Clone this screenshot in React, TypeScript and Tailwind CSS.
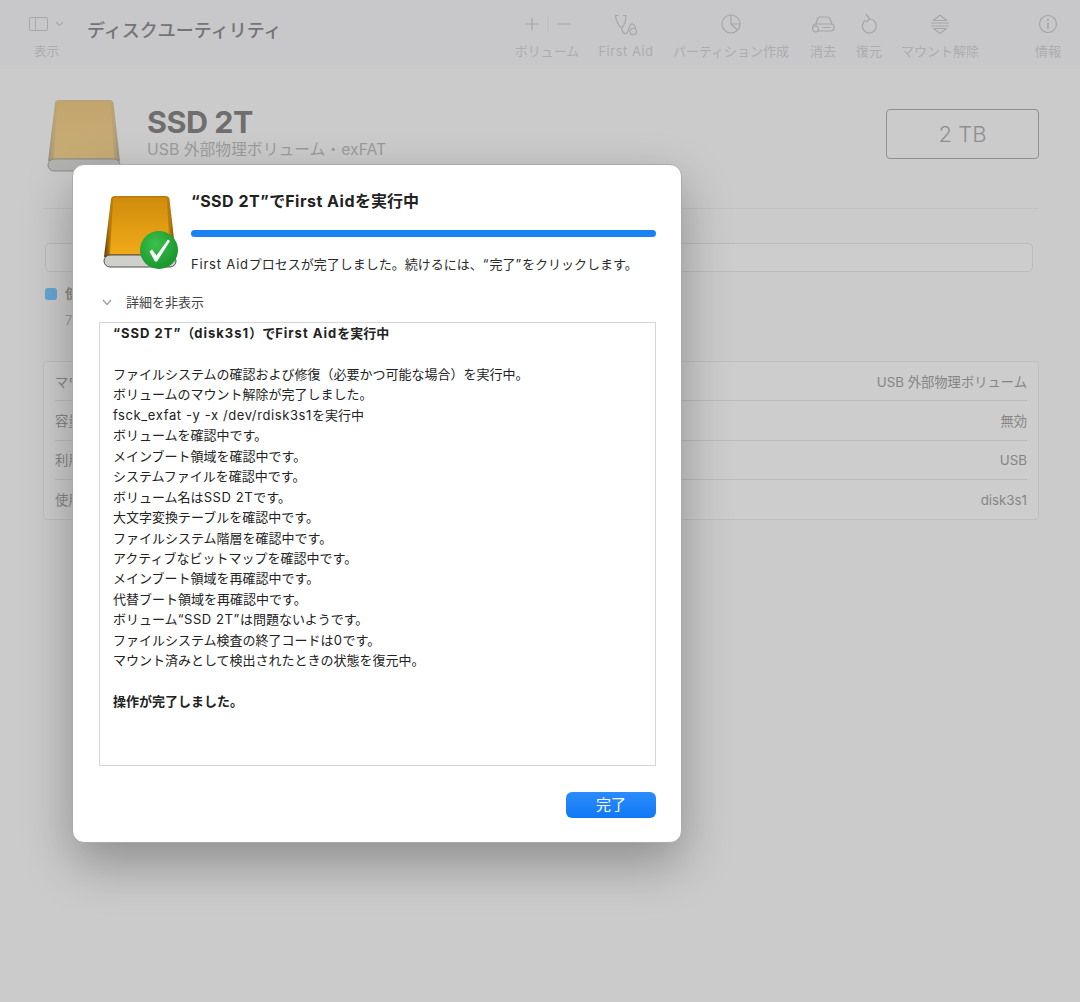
import React from 'react';

const font = { fontFamily: 'Inter, "Noto Sans CJK JP", sans-serif' };

const DriveIcon = ({ muted }: { muted?: boolean }) => (
  <svg viewBox="0 0 76 76" className="w-full h-full">
    <defs>
      <linearGradient id={muted ? 'bodyM' : 'body'} x1="0" y1="0" x2="0" y2="1">
        <stop offset="0" stopColor={muted ? '#c2a56c' : '#cf8c0c'} />
        <stop offset="1" stopColor={muted ? '#c8ad76' : '#f0aa18'} />
      </linearGradient>
      <linearGradient id={muted ? 'sideM' : 'side'} x1="0" y1="0" x2="1" y2="0">
        <stop offset="0" stopColor={muted ? '#9b9078' : '#5a3800'} />
        <stop offset="0.08" stopColor={muted ? '#b7a377' : '#b87c0a'} />
        <stop offset="0.92" stopColor={muted ? '#b7a377' : '#b87c0a'} />
        <stop offset="1" stopColor={muted ? '#9b9078' : '#5a3800'} />
      </linearGradient>
    </defs>
    <path d="M8 4 Q8.500 1 12 1 H62 Q66 1 66.500 4 L73 62 H1 Z" fill={`url(#${muted ? 'sideM' : 'side'})`} />
    <path d="M12 2.500 H62 Q64 2.500 64 5 L67 59 H7 L10 5 Q10 2.500 12 2.500 Z" fill={`url(#${muted ? 'bodyM' : 'body'})`} />
    <rect x="1" y="60" width="72" height="12" rx="6" fill={muted ? '#b3b3b1' : '#cfcfcb'} stroke={muted ? '#8a8a88' : '#4e4e4c'} strokeWidth="1" />
  </svg>
);

const ToolIcon = ({ children, w = 24 }: { children: React.ReactNode; w?: number }) => (
  <svg width={w} height="24" viewBox={`0 0 ${w} 24`} fill="none" stroke="#a6a6a8" strokeWidth="1.2" strokeLinecap="round" strokeLinejoin="round">
    {children}
  </svg>
);

const tools = [
  {
    label: 'ボリューム',
    box: 'w-[80px]',
    icon: (
      <ToolIcon w={60}>
        <path d="M9 12H21M15 6V18" />
        <path d="M31 4V20" stroke="#bdbdbf" strokeWidth="0.8" />
        <path d="M41 12H53" />
      </ToolIcon>
    ),
  },
  {
    label: 'First Aid',
    box: 'w-[78px]',
    icon: (
      <ToolIcon>
        <path d="M4 3.500H1.500C2 9 4 13 7.500 16C10.500 13 12 9 12 3.500H9.500" />
        <path d="M7.500 16C8.500 20 10 22 12 21.500C14.500 21 14.500 16 16.500 13C18 11 20 12 21.500 15.500" />
        <path d="M16 19.500A3 3 0 0 1 22.500 19.500A3 3 0 0 1 16 19.500Z" />
      </ToolIcon>
    ),
  },
  {
    label: 'パーティション作成',
    box: 'w-[132px]',
    icon: (
      <ToolIcon>
        <circle cx="12" cy="12" r="9" />
        <path d="M12 3V12L18.500 18M12 12H21" />
      </ToolIcon>
    ),
  },
  {
    label: '消去',
    box: 'w-[52px]',
    icon: (
      <ToolIcon>
        <path d="M5 12L6.500 7Q7 5 9 5H16.500Q18.500 5 19 7L21 12" />
        <rect x="2" y="12" width="21" height="7" rx="3" />
        <circle cx="4.500" cy="17" r="3" fill="#c8c8ca" />
        <path d="M12 15.500H19" />
      </ToolIcon>
    ),
  },
  {
    label: '復元',
    box: 'w-[40px]',
    icon: (
      <ToolIcon>
        <path d="M8 8.500A7 7 0 1 0 12 7" />
        <path d="M9 2.500L12.500 6.500L9.500 10" />
      </ToolIcon>
    ),
  },
  {
    label: 'マウント解除',
    box: 'w-[102px]',
    icon: (
      <ToolIcon>
        <path d="M5.500 8.500L12 3L18.500 8.500Z" />
        <path d="M3.500 11H20.500M3.500 14H20.500" />
        <path d="M5.500 16.500L12 21.500L18.500 16.500Z" />
      </ToolIcon>
    ),
  },
];

const logLines = [
  'ファイルシステムの確認および修復（必要かつ可能な場合）を実行中。',
  'ボリュームのマウント解除が完了しました。',
  'fsck_exfat -y -x /dev/rdisk3s1を実行中',
  'ボリュームを確認中です。',
  'メインブート領域を確認中です。',
  'システムファイルを確認中です。',
  'ボリューム名はSSD 2Tです。',
  '大文字変換テーブルを確認中です。',
  'ファイルシステム階層を確認中です。',
  'アクティブなビットマップを確認中です。',
  'メインブート領域を再確認中です。',
  '代替ブート領域を再確認中です。',
  'ボリューム“SSD 2T”は問題ないようです。',
  'ファイルシステム検査の終了コードは0です。',
  'マウント済みとして検出されたときの状態を復元中。',
];

const infoRows = [
  ['マウント', 'USB 外部物理ボリューム'],
  ['容量', '無効'],
  ['利用可能', 'USB'],
  ['使用済み', 'disk3s1'],
];

// latin runs sit wider than the CJK text around them
const Mixed = ({ text, className }: { text: string; className: string }) => (
  <>
    {text.split(/([A-Za-z0-9_\-/ “”]+)/).map((part, i) =>
      i % 2 === 1 ? (
        <span key={i} className={className}>
          {part}
        </span>
      ) : (
        part
      )
    )}
  </>
);

export default function App() {
  return (
    <div className="relative w-[1080px] h-[1002px] overflow-hidden bg-[#cbcbcb]" style={font}>
      {/* toolbar */}
      <div className="h-[65px] bg-[#c8c8ca] flex">
        <div className="w-[507px] flex pl-[29px] pt-[14px]">
          <div className="w-[58px] flex flex-col">
            <div className="flex items-center h-[20px] gap-[7px]">
              <svg width="19" height="14" viewBox="0 0 19 14" fill="none" stroke="#a8a8aa" strokeWidth="1">
                <rect x="0.500" y="0.500" width="18" height="13" rx="1.500" />
                <path d="M6.500 0.500V13.500" />
              </svg>
              <svg width="9" height="6" viewBox="0 0 9 6" fill="none" stroke="#a8a8aa" strokeWidth="1.200">
                <path d="M1 1L4.500 4.500L8 1" />
              </svg>
            </div>
            <span className="text-[12.5px] leading-[16px] mt-[10px] pl-[5px] text-[#acacae]">表示</span>
          </div>
          <span className="text-[18px] leading-[24px] mt-[5px] text-[#747476] font-medium">ディスクユーティリティ</span>
        </div>
        <div className="flex pt-[12px]">
          {tools.map(t => (
            <div key={t.label} className={`${t.box} flex flex-col items-center`}>
              <div className="h-[24px]">{t.icon}</div>
              <span className="text-[13px] leading-[16px] mt-[7px] text-[#acacae] whitespace-nowrap">
                <Mixed text={t.label} className="tracking-[0.5px]" />
              </span>
            </div>
          ))}
          <div className="w-[52px] ml-[31px] flex flex-col items-center">
            <div className="h-[24px]">
              <ToolIcon>
                <circle cx="12" cy="12" r="8.500" />
                <path d="M12 11V16.500" strokeWidth="1.500" />
                <path d="M12 7.500V8" strokeWidth="1.800" />
              </ToolIcon>
            </div>
            <span className="text-[13px] leading-[16px] mt-[7px] text-[#acacae] whitespace-nowrap">情報</span>
          </div>
        </div>
      </div>

      {/* window content behind the sheet */}
      <div className="pl-[43px] pr-[41px]">
        <div className="flex h-[144px] border-b border-[#c2c2c2]">
          <div className="w-[76px] h-[76px] mt-[34px] ml-[4px]">
            <DriveIcon muted />
          </div>
          <div className="ml-[24px] mt-[38px]">
            <div className="text-[30.5px] leading-[38px] font-bold text-[#6e6e6e] tracking-[-0.5px]">SSD 2T</div>
            <div className="text-[15.8px] leading-[20px] mt-[-1px] text-[#9b9b9b]">USB 外部物理ボリューム・exFAT</div>
          </div>
          <div className="ml-auto mt-[44px] w-[153px] h-[50px] rounded-[4px] border border-[#8f8f8f] flex items-center justify-center text-[22px] font-light text-[#8f8f8f]">
            2 TB
          </div>
        </div>
        <div className="ml-[2px] mr-[6px] mt-[34px] h-[29px] rounded-[5px] border border-[#bcbcbc] bg-[#cdcdcd]" />
        <div className="ml-[2px] mt-[15px] flex items-center h-[14px] gap-[8px]">
          <span className="w-[12px] h-[12px] rounded-[3px] bg-[#65a6d3]" />
          <span className="text-[13px] font-bold text-[#8a8a8a]">使用済み</span>
        </div>
        <div className="ml-[22px] mt-[10px] text-[13px] leading-[18px] text-[#9b9b9b]">7</div>
        <div className="mt-[32px] h-[159px] rounded-[4px] border border-[#bfbfbf] bg-[#cdcdcd] px-[11px] flex flex-col">
          {infoRows.map(([k, v], i) => (
            <div key={k} className={`h-[40px] pt-[3px] flex items-center justify-between text-[13.3px] text-[#858585] ${i < 3 ? 'border-b border-[#bababa]' : ''}`}>
              <span>{k}</span>
              <span>{v}</span>
            </div>
          ))}
        </div>
      </div>

      {/* First Aid sheet */}
      <div className="absolute left-[72px] top-[164px] w-[610px] h-[679px] rounded-[12px] bg-white border border-[#a9a9a9] shadow-[0_20px_50px_rgba(0,0,0,0.3)] pl-[26px] pr-[25px] flex flex-col">
        <div className="flex h-[120px]">
          <div className="relative w-[76px] h-[76px] mt-[30px] ml-[4px]">
            <DriveIcon />
            <svg className="absolute left-[37px] top-[36px]" width="38" height="38" viewBox="0 0 38 38">
              <defs>
                <radialGradient id="badge" cx="0.4" cy="0.35" r="0.75">
                  <stop offset="0" stopColor="#3cc04c" />
                  <stop offset="1" stopColor="#159028" />
                </radialGradient>
              </defs>
              <circle cx="19" cy="19" r="19" fill="url(#badge)" />
              <path d="M9.500 20.500L12 18.500L16.500 24.500L28 8.500L30 10L17 30.500H15Z" fill="#fff" />
            </svg>
          </div>
          <div className="ml-[12px] flex-1 pt-[25px]">
            <div className="text-[16px] leading-[22px] font-bold text-[#222]">
              <Mixed text="“SSD 2T”でFirst Aidを実行中" className="tracking-[0.5px]" />
            </div>
            <div className="h-[7px] mt-[18px] rounded-full bg-[#1a82f2]" />
            <div className="text-[13px] leading-[18px] mt-[18px] text-[#2a2a2a]">
              <Mixed text="First Aidプロセスが完了しました。続けるには、“完了”をクリックします。" className="tracking-[0.8px]" />
            </div>
          </div>
        </div>
        <div className="flex items-center h-[37px] pb-[2px] pl-[3px]">
          <svg width="10" height="7" viewBox="0 0 10 7" fill="none" stroke="#9a9a9a" strokeWidth="1.200">
            <path d="M1 1L5 5.500L9 1" />
          </svg>
          <span className="ml-[14px] text-[13px] text-[#444]">詳細を非表示</span>
        </div>
        <div className="h-[444px] border border-[#d6d6d6] pl-[13px] text-[13px] leading-[20.45px] text-[#222]">
          <div className="font-bold">
            <Mixed text="“SSD 2T”（disk3s1）でFirst Aidを実行中" className="tracking-[1px]" />
          </div>
          <div className="h-[20.45px]" />
          {logLines.map(l => (
            <div key={l}>
              <Mixed text={l} className="tracking-[0.6px]" />
            </div>
          ))}
          <div className="h-[20.45px]" />
          <div className="font-bold">操作が完了しました。</div>
        </div>
        <div className="flex justify-end mt-[26px]">
          <button className="w-[90px] h-[26px] rounded-[6px] bg-gradient-to-b from-[#2b8cfb] to-[#0f78f5] text-white text-[15px] leading-[24px]">
            完了
          </button>
        </div>
      </div>
    </div>
  );
}
